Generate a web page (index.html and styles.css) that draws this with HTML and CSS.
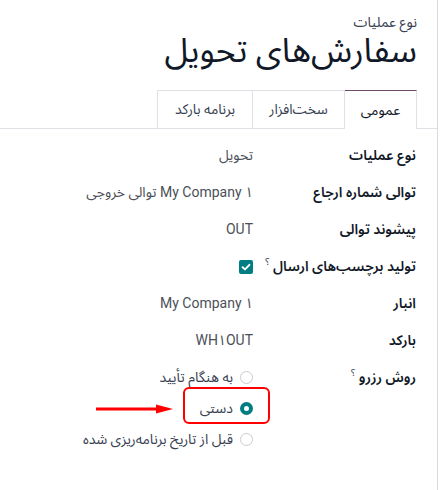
FILE: index.html
```html
<!DOCTYPE html>
<html lang="fa" dir="rtl">
<head>
<meta charset="utf-8">
<link rel="stylesheet" href="styles.css">
</head>
<body>
<div class="sheet">
  <div class="head">
    <div class="subtitle">نوع عملیات</div>
    <h1 class="title">سفارش‌های تحویل</h1>
  </div>
  <div class="tabs">
    <div class="tab active">عمومی</div>
    <div class="tab">سخت‌افزار</div>
    <div class="tab">برنامه بارکد</div>
  </div>
  <div class="form">
    <div class="label">نوع عملیات</div>
    <div class="value">تحویل</div>

    <div class="label">توالی شماره ارجاع</div>
    <div class="value">My Company ۱ توالی خروجی</div>

    <div class="label">پیشوند توالی</div>
    <div class="value">OUT</div>

    <div class="label">تولید برچسب‌های ارسال <sup>؟</sup></div>
    <div class="value"><span class="check"><svg viewBox="0 0 14 14" width="14" height="14"><path d="M3.6 7.2 L6 9.4 L10.4 4.8" fill="none" stroke="#fff" stroke-width="1.9" stroke-linecap="round" stroke-linejoin="round"/></svg></span></div>

    <div class="label">انبار</div>
    <div class="value">My Company ۱</div>

    <div class="label">بارکد</div>
    <div class="value">WH۱OUT</div>

    <div class="label">روش رزرو <sup>؟</sup></div>
    <div class="value radios">
      <div class="opt"><span class="radio"></span>به هنگام تأیید</div>
      <div class="opt sel-wrap"><span class="radio on"></span>دستی<span class="hl"></span></div>
      <div class="opt"><span class="radio"></span>قبل از تاریخ برنامه‌ریزی شده</div>
    </div>
  </div>
  <svg class="arrow" width="80" height="12" viewBox="0 0 80 12"><line x1="0" y1="6" x2="64" y2="6" stroke="#f00" stroke-width="3"/><path d="M60 1.5 L77 6 L60 10.5 Z" fill="#f00"/></svg>
</div>
</body>
</html>
```

FILE: styles.css
```css
html, body {
  margin: 0;
  padding: 0;
  background: #fff;
}
body {
  font-family: Roboto, "Noto Sans Arabic", "DejaVu Sans", sans-serif;
  font-size: 14px;
  color: #212529;
  width: 443px;
  height: 490px;
  overflow: hidden;
}
.sheet {
  position: relative;
  margin-right: 5px;
  height: 490px;
  border-right: 1px solid #d8dadd;
  box-sizing: border-box;
}
.head {
  padding: 11px 20px 0 0;
}
.subtitle {
  font-size: 14px;
  line-height: 22px;
  color: #374151;
}
.title {
  margin: -7px 0 0 0;
  font-size: 34px;
  font-weight: 400;
  line-height: 48px;
  color: #111827;
}
.tabs {
  display: flex;
  margin-top: 16px;
  padding-right: 20px;
  border-bottom: 1px solid #dee2e6;
  height: 38px;
  box-sizing: content-box;
}
.tab {
  display: flex;
  align-items: center;
  justify-content: center;
  border: 1px solid #dee2e6;
  border-bottom: none;
  margin-left: -1px;
  color: #374151;
  font-size: 14px;
}
.tab:nth-child(1) { width: 71px; }
.tab:nth-child(2) { width: 91px; }
.tab:nth-child(3) { width: 94px; }
.tab.active {
  border-top: 1px solid #714b67;
  background: #fff;
  margin-bottom: -1px;
  color: #111827;
}
.form {
  display: grid;
  grid-template-columns: 163px auto;
  grid-auto-rows: minmax(37px, auto);
  padding: 8px 21px 0 0;
  align-items: start;
}
.label, .value {
  line-height: 21px;
  padding: 8px 0;
}
.label {
  font-weight: 600;
  color: #111827;
}
.label sup {
  font-size: 10px;
  font-weight: 400;
  color: #374151;
  line-height: 0;
  vertical-align: 0;
  position: relative;
  top: -6px;
}
.value {
  color: #4b5058;
}
.check {
  display: inline-flex;
  width: 14px;
  height: 14px;
  background: #017e84;
  border-radius: 2px;
  vertical-align: middle;
}
.radios {
  display: flex;
  flex-direction: column;
  gap: 10px;
}
.opt {
  position: relative;
  display: flex;
  align-items: center;
  gap: 7px;
  color: #374151;
}
.radio {
  width: 13px;
  height: 13px;
  border: 1px solid #c9ccd0;
  border-radius: 50%;
  box-sizing: border-box;
  background: #fff;
}
.radio.on {
  border: 4px solid #017e84;
}
.hl {
  position: absolute;
  right: -17px;
  width: 87px;
  top: -11px;
  height: 37px;
  border: 2px solid #f00;
  border-radius: 6px;
  box-sizing: border-box;
}
.arrow {
  position: absolute;
  left: 96px;
  top: 403px;
}
```
